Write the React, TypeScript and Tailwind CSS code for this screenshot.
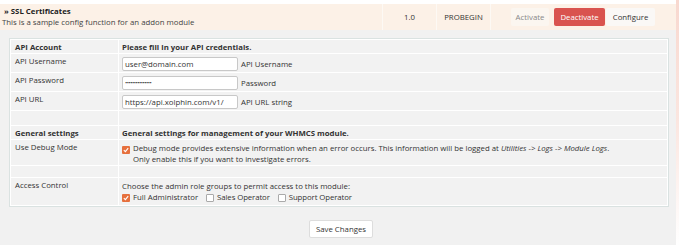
import React from "react";

function Check({ on }: { on: boolean }) {
  return on ? (
    <span className="inline-flex w-[8px] h-[8px] rounded-[1px] bg-[#e6703d] items-center justify-center shrink-0">
      <svg width="6" height="6" viewBox="0 0 6 6">
        <path d="M0.8 3.1 L2.4 4.6 L5.2 1.2" fill="none" stroke="#fff" strokeWidth="1.1" />
      </svg>
    </span>
  ) : (
    <span className="inline-block w-[8px] h-[8px] rounded-[1px] bg-white border border-[#aaa] shrink-0" />
  );
}

function Row({ label, h, bold, children }: { label?: string; h: number; bold?: boolean; children?: React.ReactNode }) {
  return (
    <>
      <div className={`bg-[#f2f2f2] pl-[4px] pt-[2px] ${bold ? "font-bold" : ""}`} style={{ height: h }}>
        {label}
      </div>
      <div className={`bg-[#f2f2f2] pl-[3px] pt-[2px] ${bold ? "font-bold" : ""}`} style={{ height: h }}>
        {children}
      </div>
    </>
  );
}

function InputRow({ value, after, password }: { value: string; after: string; password?: boolean }) {
  return (
    <div className="flex items-center gap-[3px] pt-[1px]">
      <div className="w-[116px] h-[14px] bg-white border border-[#c8c8c8] rounded-[2px] flex items-center px-[2px] text-[#333]">
        {password ? <span className="tracking-[-0.5px] text-[6px] leading-none">•••••••••••••••</span> : value}
      </div>
      <span>{after}</span>
    </div>
  );
}

export default function App() {
  return (
    <div className="w-[679px] h-[245px] bg-white font-['Open_Sans',sans-serif] text-[7.8px] leading-[11px] text-[#333] flex overflow-hidden">
      <div className="w-[676px] flex flex-col">
        <div className="h-[4px] bg-white" />
        <div className="h-[26px] bg-[#fcf1e7] flex">
          <div className="w-[382px] pl-[2px] flex flex-col justify-center">
            <div className="font-bold pl-[2px] text-[#222]">» SSL Certificates</div>
            <div className="text-[#444]">This is a sample config function for an addon module</div>
          </div>
          <div className="w-[54px] border-l border-[#fdf9f4] flex items-center justify-center">1.0</div>
          <div className="w-[54px] border-l border-[#fdf9f4] flex items-center justify-center">PROBEGIN</div>
          <div className="flex-1 border-l border-[#fdf9f4] flex items-center pl-[20px]">
            <div className="h-[18px] w-[38px] rounded-[2px] bg-[#fbf6f0] text-[#888] flex items-center justify-center">Activate</div>
            <div className="ml-[5px] h-[18px] w-[51px] rounded-[2px] bg-[#d9534f] text-white flex items-center justify-center">Deactivate</div>
            <div className="ml-[1px] h-[18px] w-[49px] rounded-[2px] bg-[#faf8f6] text-[#333] flex items-center justify-center">Configure</div>
          </div>
        </div>
        <div className="flex-1 bg-[#f1f1f1] pt-[8px] pl-[9px] pr-[7px]">
          <div className="border border-[#dae2e1] bg-white p-[1px] grid grid-cols-[107px_1fr] gap-[1px]">
            <Row label="API Account" h={13} bold>
              Please fill in your API credentials.
            </Row>
            <Row label="API Username" h={18}>
              <InputRow value="user@domain.com" after="API Username" />
            </Row>
            <Row label="API Password" h={18}>
              <InputRow value="" after="Password" password />
            </Row>
            <Row label="API URL" h={18}>
              <InputRow value="https://api.xolphin.com/v1/" after="API URL string" />
            </Row>
            <Row h={14} />
            <Row label="General settings" h={13} bold>
              General settings for management of your WHMCS module.
            </Row>
            <Row label="Use Debug Mode" h={25}>
              <div className="flex items-start gap-[3px] pt-[1px]">
                <span className="mt-[2px]"><Check on /></span>
                <div>
                  <div>
                    Debug mode provides extensive information when an error occurs. This information will be logged at{" "}
                    <i>Utilities -&gt; Logs -&gt; Module Logs</i>.
                  </div>
                  <div>Only enable this if you want to investigate errors.</div>
                </div>
              </div>
            </Row>
            <Row h={11} />
            <Row label="Access Control" h={27}>
              <div className="pt-[1px]">
                <div>Choose the admin role groups to permit access to this module:</div>
                <div className="flex items-center gap-[3px]">
                  <Check on />
                  <span className="mr-[5px]">Full Administrator</span>
                  <Check on={false} />
                  <span className="mr-[5px] tracking-[-0.1px]">Sales Operator</span>
                  <Check on={false} />
                  <span className="tracking-[-0.1px]">Support Operator</span>
                </div>
              </div>
            </Row>
          </div>
          <div className="flex justify-center pt-[13px]">
            <div className="ml-[4px] h-[18px] w-[64px] bg-white border border-[#ddd] rounded-[2px] flex items-center justify-center text-[#333]">
              Save Changes
            </div>
          </div>
        </div>
      </div>
      <div className="w-[3px] bg-gradient-to-b from-[#f8d8cf] via-[#fbe6e0] to-white" />
    </div>
  );
}
